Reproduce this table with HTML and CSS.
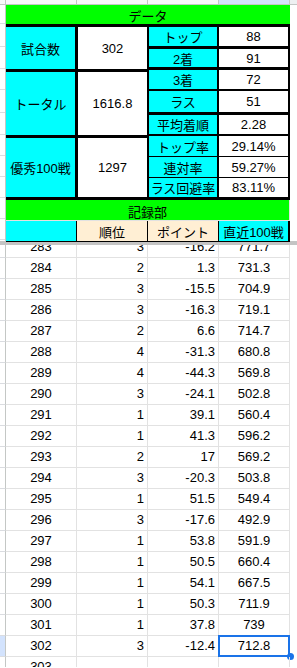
FILE: index.html
```html
<!DOCTYPE html>
<html lang="ja">
<head>
<meta charset="utf-8">
<link rel="stylesheet" href="styles.css">
</head>
<body>
<div class="colhead">
  <div class="ch corner"></div>
  <div class="ch col"></div>
  <div class="ch col"></div>
  <div class="ch col"></div>
  <div class="ch col sel"></div>
  <div class="ch rest"></div>
</div>

<div class="frozen">
  <div class="rh-frozen">
    <div class="rhf" style="height:19px"></div>
    <div class="rhf" style="height:23px"></div>
    <div class="rhf" style="height:22px"></div>
    <div class="rhf" style="height:21px"></div>
    <div class="rhf" style="height:23px"></div>
    <div class="rhf" style="height:22px"></div>
    <div class="rhf" style="height:21px"></div>
    <div class="rhf" style="height:21px"></div>
    <div class="rhf" style="height:21px"></div>
    <div class="rhf" style="height:21px"></div>
    <div class="rhf" style="height:21px"></div>
  </div>
  <div class="ftable">
    <div class="bar title">データ</div>
    <div class="blocks">
      <div class="lblock">
        <div class="lrow r-shiai"><div class="lab">試合数</div><div class="val">302</div></div>
        <div class="lrow r-total"><div class="lab">トータル</div><div class="val">1616.8</div></div>
        <div class="lrow r-yushu"><div class="lab">優秀100戦</div><div class="val">1297</div></div>
      </div>
      <div class="rblock">
        <div class="rrow h19 b3"><div class="lab">トップ</div><div class="val">88</div></div>
        <div class="rrow h18 b3"><div class="lab">2着</div><div class="val">91</div></div>
        <div class="rrow h19 b2"><div class="lab">3着</div><div class="val">72</div></div>
        <div class="rrow h21 b3"><div class="lab">ラス</div><div class="val">51</div></div>
        <div class="rrow h19 b2"><div class="lab">平均着順</div><div class="val">2.28</div></div>
        <div class="rrow h20 b1"><div class="lab">トップ率</div><div class="val">29.14%</div></div>
        <div class="rrow h20 b1"><div class="lab">連対率</div><div class="val">59.27%</div></div>
        <div class="rrow h19 b3"><div class="lab">ラス回避率</div><div class="val">83.11%</div></div>
      </div>
    </div>
    <div class="bar section">記録部</div>
    <div class="hrow">
      <div class="hc cyan"></div>
      <div class="hc peach">順位</div>
      <div class="hc peach">ポイント</div>
      <div class="hc cyan last">直近100戦</div>
    </div>
  </div>
</div>

<div class="divider"></div>

<div class="scroll">
  <div class="rows">
    <div class="row"><div class="rh"></div><div class="c ca">283</div><div class="c cr">3</div><div class="c cr">-16.2</div><div class="c ca">771.7</div></div>
    <div class="row"><div class="rh"></div><div class="c ca">284</div><div class="c cr">2</div><div class="c cr">1.3</div><div class="c ca">731.3</div></div>
    <div class="row"><div class="rh"></div><div class="c ca">285</div><div class="c cr">3</div><div class="c cr">-15.5</div><div class="c ca">704.9</div></div>
    <div class="row"><div class="rh"></div><div class="c ca">286</div><div class="c cr">3</div><div class="c cr">-16.3</div><div class="c ca">719.1</div></div>
    <div class="row"><div class="rh"></div><div class="c ca">287</div><div class="c cr">2</div><div class="c cr">6.6</div><div class="c ca">714.7</div></div>
    <div class="row"><div class="rh"></div><div class="c ca">288</div><div class="c cr">4</div><div class="c cr">-31.3</div><div class="c ca">680.8</div></div>
    <div class="row"><div class="rh"></div><div class="c ca">289</div><div class="c cr">4</div><div class="c cr">-44.3</div><div class="c ca">569.8</div></div>
    <div class="row"><div class="rh"></div><div class="c ca">290</div><div class="c cr">3</div><div class="c cr">-24.1</div><div class="c ca">502.8</div></div>
    <div class="row"><div class="rh"></div><div class="c ca">291</div><div class="c cr">1</div><div class="c cr">39.1</div><div class="c ca">560.4</div></div>
    <div class="row"><div class="rh"></div><div class="c ca">292</div><div class="c cr">1</div><div class="c cr">41.3</div><div class="c ca">596.2</div></div>
    <div class="row"><div class="rh"></div><div class="c ca">293</div><div class="c cr">2</div><div class="c cr">17</div><div class="c ca">569.2</div></div>
    <div class="row"><div class="rh"></div><div class="c ca">294</div><div class="c cr">3</div><div class="c cr">-20.3</div><div class="c ca">503.8</div></div>
    <div class="row"><div class="rh"></div><div class="c ca">295</div><div class="c cr">1</div><div class="c cr">51.5</div><div class="c ca">549.4</div></div>
    <div class="row"><div class="rh"></div><div class="c ca">296</div><div class="c cr">3</div><div class="c cr">-17.6</div><div class="c ca">492.9</div></div>
    <div class="row"><div class="rh"></div><div class="c ca">297</div><div class="c cr">1</div><div class="c cr">53.8</div><div class="c ca">591.9</div></div>
    <div class="row"><div class="rh"></div><div class="c ca">298</div><div class="c cr">1</div><div class="c cr">50.5</div><div class="c ca">660.4</div></div>
    <div class="row"><div class="rh"></div><div class="c ca">299</div><div class="c cr">1</div><div class="c cr">54.1</div><div class="c ca">667.5</div></div>
    <div class="row"><div class="rh"></div><div class="c ca">300</div><div class="c cr">1</div><div class="c cr">50.3</div><div class="c ca">711.9</div></div>
    <div class="row"><div class="rh"></div><div class="c ca">301</div><div class="c cr">1</div><div class="c cr">37.8</div><div class="c ca">739</div></div>
    <div class="row"><div class="rh selrow"></div><div class="c ca">302</div><div class="c cr">3</div><div class="c cr">-12.4</div><div class="c ca active">712.8<span class="selbox"></span><span class="handle"></span></div></div>
    <div class="row"><div class="rh"></div><div class="c ca">303</div><div class="c cr"></div><div class="c cr"></div><div class="c ca"></div></div>
  </div>
</div>
</body>
</html>
```

FILE: styles.css
```css
* { box-sizing: border-box; margin: 0; padding: 0; }

html, body {
  width: 297px;
  height: 668px;
  overflow: hidden;
  background: #fff;
}

body {
  font-family: "Liberation Sans", Arial, "Noto Sans CJK JP", sans-serif;
  font-size: 13px;
  color: #000;
}

/* column header strip (mostly scrolled off) */
.colhead {
  display: flex;
  height: 5px;
  background: #f8f9fa;
  border-bottom: 1px solid #c4c7c5;
}
.ch { border-right: 1px solid #c4c7c5; height: 100%; }
.ch.corner { width: 6px; }
.ch.col { width: 71px; }
.ch.sel { background: #d3e3fd; }
.ch.rest { flex: 1; border-right: none; background: #eef0f2; }

/* frozen region */
.frozen { display: flex; height: 236px; }

.rh-frozen {
  width: 6px;
  display: flex;
  flex-direction: column;
  border-right: 1px solid #c4c7c5;
}
.rhf { border-bottom: 1px solid #dadce0; flex: none; }

.ftable { width: 284px; }

.bar {
  display: flex;
  align-items: center;
  justify-content: center;
  background: #00ff00;
}
.bar.title {
  height: 22px;
  border-bottom: 3px solid #000;
  padding-top: 1px;
}
.bar.section {
  height: 21px;
  border-right: 1px solid #e2e2e2;
  border-bottom: 1px solid #e2e2e2;
  padding-top: 2px;
}

.blocks { display: flex; }

.lab, .val, .hc {
  display: flex;
  align-items: center;
  justify-content: center;
  white-space: nowrap;
}
.lab { background: #00ffff; }
.val { background: #fff; flex: 1; }

.lblock { width: 141px; }
.lrow { display: flex; border-bottom: 3px solid #000; }
.lrow .lab { width: 72px; border-right: 3px solid #000; }
.r-shiai { height: 45px; }
.r-total { height: 66px; }
.r-yushu { height: 62px; }

.rblock {
  width: 143px;
  border-left: 2px solid #000;
  border-right: 2px solid #000;
}
.rrow { display: flex; }
.rrow .lab { width: 70px; border-right: 2px solid #000; }
.rrow.b1 { border-bottom: 1px solid #000; }
.rrow.b2 { border-bottom: 2px solid #000; }
.rrow.b3 { border-bottom: 3px solid #000; }
.rrow.h18.b3 { height: 21px; }
.rrow.h19.b3 { height: 22px; }
.rrow.h19.b2 { height: 21px; }
.rrow.h21.b3 { height: 24px; }
.rrow.h20.b1 { height: 21px; }

.hrow {
  display: flex;
  height: 21px;
  border-bottom: 1px solid #000;
}
.hc {
  width: 71px;
  border-right: 1px solid #000;
  padding-top: 1px;
}
.hc.last { width: 71px; border-right: 2px solid #000; }
.cyan { background: #00ffff; }
.peach { background: #ffefd4; }

.divider {
  height: 4px;
  background: #c4c4c4;
}

/* scrolling rows */
.scroll {
  height: 422px;
  overflow: hidden;
}
.rows { margin-top: -8px; }

.row {
  display: flex;
  height: 21px;
}
.rh {
  width: 6px;
  border-right: 1px solid #c4c7c5;
  border-bottom: 1px solid #dadce0;
}
.rh.selrow { background: #d3e3fd; }
.c {
  position: relative;
  width: 71px;
  border-right: 1px solid #e2e2e2;
  border-bottom: 1px solid #e2e2e2;
  line-height: 20px;
  white-space: nowrap;
}
.ca { text-align: center; }
.cr { text-align: right; padding-right: 3px; }

.selbox {
  position: absolute;
  left: -1px;
  top: -1px;
  width: 72px;
  height: 22px;
  border: 2px solid #1a73e8;
}
.handle {
  position: absolute;
  left: 68px;
  top: 17px;
  width: 7px;
  height: 7px;
  border-radius: 50%;
  background: #1a73e8;
}
```
